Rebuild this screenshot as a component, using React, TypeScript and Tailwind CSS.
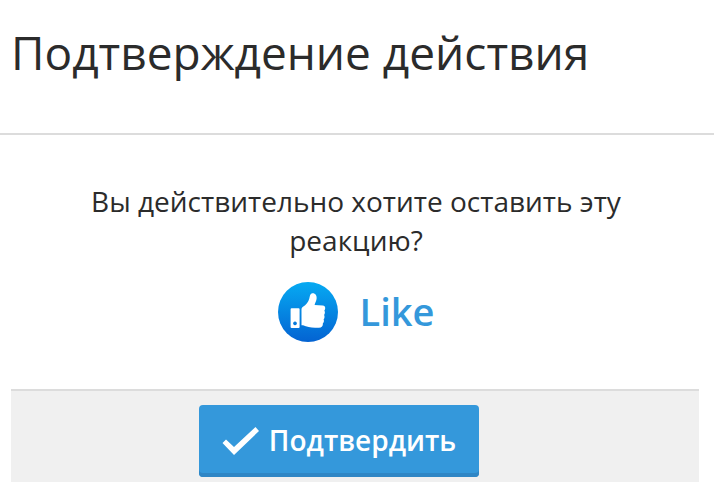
interface ReactionProps {
  name: string
}

const LikeIcon = () => (
  <svg viewBox="0 0 60 60" className="h-[60px] w-[60px]" aria-hidden="true">
    <defs>
      <linearGradient id="like-bg" x1="0" y1="0" x2="0" y2="1">
        <stop offset="0" stopColor="#06aaf2" />
        <stop offset="1" stopColor="#0463d2" />
      </linearGradient>
    </defs>
    <circle cx="30" cy="30" r="30" fill="url(#like-bg)" />
    <path fill="#fff" fillRule="evenodd" d="M13.600 26.300h7q1 0 1 1v17.800q0 1-1 1h-7q-1 0-1-1v-17.800q0-1 1-1zM17 39.500a1.900 1.900 0 1 0 .01 0z" />
    <path fill="#fff" d="M23.500 27.500c0-1.300.5-2 1.500-2.700 3-2 5.500-4.800 6.300-8.300.6-2.500.9-4.700 2.700-5.200 3.200-.5 5 2 4.600 5.500-.3 2.400-1.600 4.500-2 6.200l8.200.4c1.500.1 2.400 1.100 2.400 2.500 0 1.200-.4 2-.9 2.700.8 1 .9 3.200-.2 4.400.7 1.300.6 3.300-.5 4.300.6 1.500.4 3-.7 4 .2 2.900-1.200 4.500-4 4.500-5.500 0-9.500-.3-13-1.500-1.200-.5-2.500-1-4.400-1z" />
  </svg>
)

const Reaction = ({ name }: ReactionProps) => (
  <a href="#" className="flex items-center justify-center gap-[22px] text-[#3498db]">
    <LikeIcon />
    <span className="pb-0.5 text-[38px] leading-[58px] font-semibold">{name}</span>
  </a>
)

export default function App() {
  return (
    <main className="min-h-screen bg-white font-['Open_Sans',sans-serif] text-[#2b2b2b]">
      <header className="border-b-2 border-[#dcdcdc] px-[11px] pt-[18px] pb-[47px]">
        <h1 className="text-[46px] leading-[68px]">Подтверждение действия</h1>
      </header>

      <form className="pr-[15px] pl-[11px]" onSubmit={(event) => event.preventDefault()}>
        <div className="pt-[47px] pr-[46px] pb-[47px] pl-12">
          <p className="mb-[22px] text-center text-[28px] leading-[39px]">
            Вы действительно хотите оставить эту реакцию?
          </p>
          <Reaction name="Like" />
        </div>

        <div className="flex justify-center border-t-2 border-[#dcdcdc] bg-[#f0f0f0] pt-[14px] pr-8 pb-[5px]">
          <button
            type="submit"
            className="flex h-[72px] w-[280px] items-center justify-center gap-[10px] rounded-[4px] bg-[#3498db] text-[28px] font-semibold text-white shadow-[inset_0_-4px_0_#2f86c5]"
          >
            <svg viewBox="0 0 37 28" className="h-7 w-[37px]" aria-hidden="true">
              <path d="M.5 16L4 12.500l8 7.500L33.500 0 37 4 12 28z" fill="#fff" />
            </svg>
            <span className="pb-0.5">Подтвердить</span>
          </button>
        </div>
      </form>
    </main>
  )
}
